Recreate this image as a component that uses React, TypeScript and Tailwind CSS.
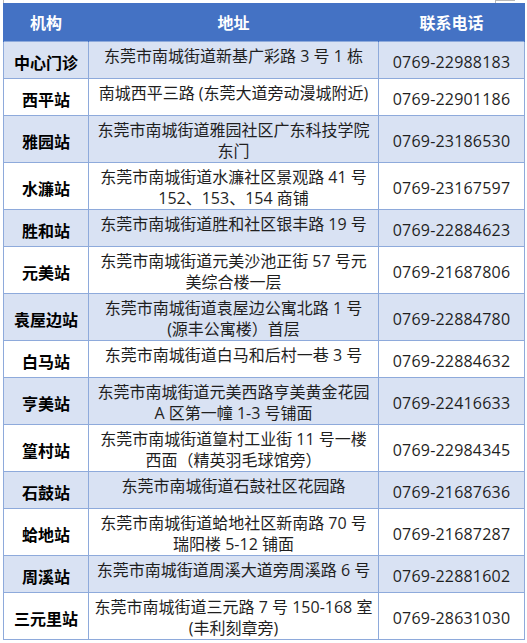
const rows: { name: string; addr: string[]; phone: string }[] = [
  { name: '中心门诊', addr: ['东莞市南城街道新基广彩路 3 号 1 栋'], phone: '0769-22988183' },
  { name: '西平站', addr: ['南城西平三路 (东莞大道旁动漫城附近)'], phone: '0769-22901186' },
  { name: '雅园站', addr: ['东莞市南城街道雅园社区广东科技学院', '东门'], phone: '0769-23186530' },
  { name: '水濂站', addr: ['东莞市南城街道水濂社区景观路 41 号', '152、153、154 商铺'], phone: '0769-23167597' },
  { name: '胜和站', addr: ['东莞市南城街道胜和社区银丰路 19 号'], phone: '0769-22884623' },
  { name: '元美站', addr: ['东莞市南城街道元美沙池正街 57 号元', '美综合楼一层'], phone: '0769-21687806' },
  { name: '袁屋边站', addr: ['东莞市南城街道袁屋边公寓北路 1 号', '(源丰公寓楼）首层'], phone: '0769-22884780' },
  { name: '白马站', addr: ['东莞市南城街道白马和后村一巷 3 号'], phone: '0769-22884632' },
  { name: '亨美站', addr: ['东莞市南城街道元美西路亨美黄金花园', 'A 区第一幢 1-3 号铺面'], phone: '0769-22416633' },
  { name: '篁村站', addr: ['东莞市南城街道篁村工业街 11 号一楼', '西面（精英羽毛球馆旁）'], phone: '0769-22984345' },
  { name: '石鼓站', addr: ['东莞市南城街道石鼓社区花园路'], phone: '0769-21687636' },
  { name: '蛤地站', addr: ['东莞市南城街道蛤地社区新南路 70 号', '瑞阳楼 5-12 铺面'], phone: '0769-21687287' },
  { name: '周溪站', addr: ['东莞市南城街道周溪大道旁周溪路 6 号'], phone: '0769-22881602' },
  { name: '三元里站', addr: ['东莞市南城街道三元路 7 号 150-168 室', '(丰利刻章旁)'], phone: '0769-28631030' },
]

export default function App() {
  return (
    <div className="w-[527px] h-[643px] bg-white font-['Open_Sans','Noto_Sans_CJK_SC',sans-serif] text-[16px]">
      {/* little word-table markers above the table */}
      <div className="relative h-[3px]">
        <span className="absolute left-[3px] top-0 h-[3px] w-px bg-[#b8b8b8]" />
        <span className="absolute left-[495px] top-0 h-[3px] w-px bg-[#b8b8b8]" />
        <span className="absolute left-[495px] top-0 h-px w-[20px] bg-[#b8b8b8]" />
      </div>
      <table className="ml-[3px] w-[521px] table-fixed border-collapse">
        <colgroup>
          <col className="w-[85px]" />
          <col className="w-[290px]" />
          <col className="w-[146px]" />
        </colgroup>
        <thead>
          <tr className="h-[38px] bg-[#4472c4] text-white font-bold">
            <th className="font-['Noto_Sans_CJK_SC',sans-serif] text-center align-middle border-x border-[#4472c4]">机构</th>
            <th className="font-['Noto_Sans_CJK_SC',sans-serif] text-center align-middle">地址</th>
            <th className="font-['Noto_Sans_CJK_SC',sans-serif] text-center align-middle border-x border-[#4472c4]">联系电话</th>
          </tr>
        </thead>
        <tbody>
          {rows.map((r, i) => (
            <tr
              key={r.name}
              className={`${r.addr.length > 1 ? 'h-[47px]' : 'h-[37px]'} ${i % 2 === 0 ? 'bg-[#d9e2f3]' : 'bg-white'}`}
            >
              <td className="border border-[#8eaadb] text-center align-middle pt-1 font-bold text-black font-['Noto_Sans_CJK_SC',sans-serif] whitespace-nowrap">
                {r.name}
              </td>
              <td className="border border-[#8eaadb] text-center align-top pt-[4px] px-1 leading-[21px] text-[#1f1f1f] whitespace-nowrap">
                {r.addr.map((l) => (
                  <div key={l}>{l}</div>
                ))}
              </td>
              <td className="border border-[#8eaadb] text-center align-middle pt-1 text-[#1f1f1f] tracking-[0.2px]">
                {r.phone}
              </td>
            </tr>
          ))}
        </tbody>
      </table>
    </div>
  )
}
